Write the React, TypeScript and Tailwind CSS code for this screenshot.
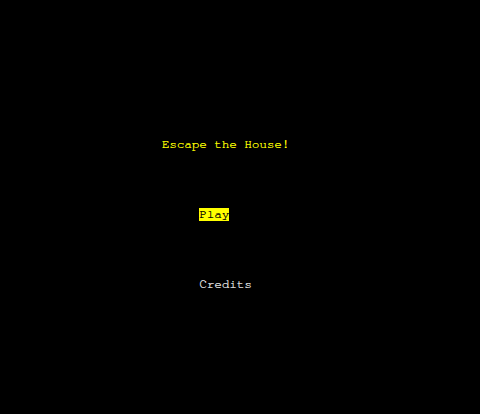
export default function App() {
  return (
    <div className="min-h-screen w-full bg-black font-['Nimbus_Mono_PS','FreeMono','Courier_New','Courier','Liberation_Mono',monospace] text-[12.5px] [text-shadow:0.35px_0_0_currentColor]">
      <div className="flex w-[451px] flex-col items-center pt-[138px]">
        <h1 className="h-[14px] leading-[14px] text-[#ffff00]">Escape the House!</h1>
        <ul className="mt-[56px] flex flex-col items-start gap-[57px]">
          <li className="h-[13px] bg-[#ffff00] leading-[13px] text-black">Play</li>
          <li className="h-[14px] leading-[14px] text-[#e0e0e0]">Credits</li>
        </ul>
      </div>
    </div>
  );
}
